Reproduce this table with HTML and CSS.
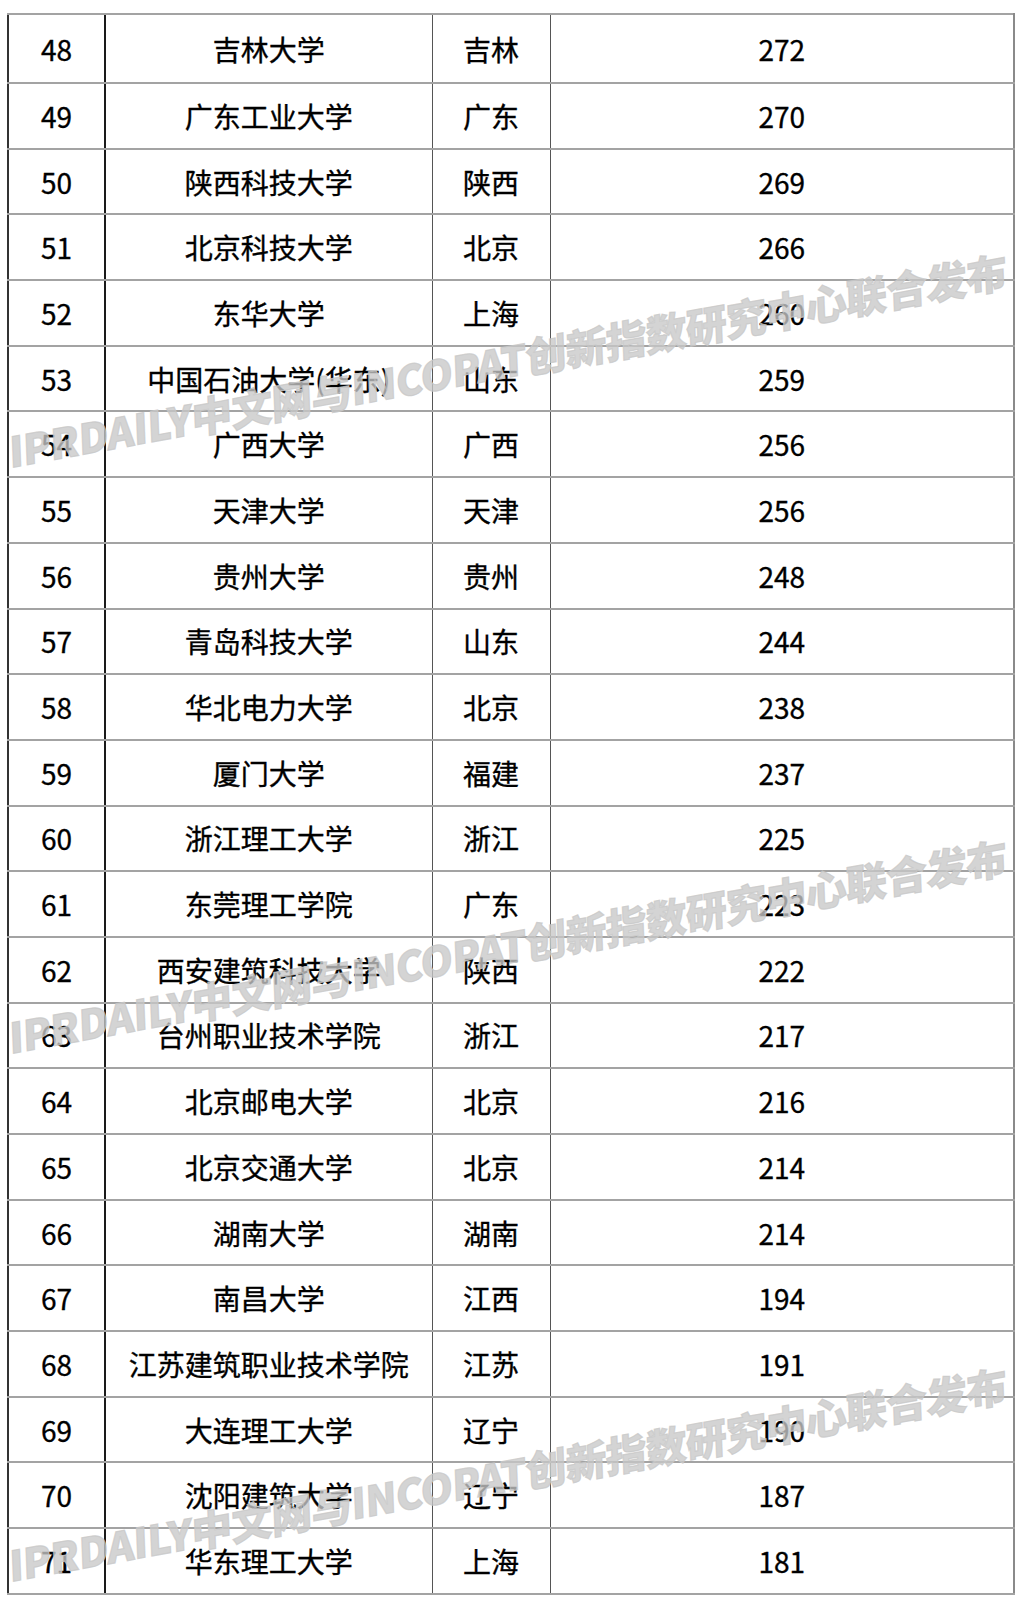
FILE: index.html
```html
<!DOCTYPE html>
<html lang="zh">
<head>
<meta charset="utf-8">
<link rel="stylesheet" href="styles.css">
</head>
<body>
<div class="page">
<table class="rank">
<colgroup><col class="c1"><col class="c2"><col class="c3"><col class="c4"></colgroup>
<tbody>
<tr class="first"><td>48</td><td>吉林大学</td><td>吉林</td><td>272</td></tr>
<tr><td>49</td><td>广东工业大学</td><td>广东</td><td>270</td></tr>
<tr><td>50</td><td>陕西科技大学</td><td>陕西</td><td>269</td></tr>
<tr><td>51</td><td>北京科技大学</td><td>北京</td><td>266</td></tr>
<tr><td>52</td><td>东华大学</td><td>上海</td><td>260</td></tr>
<tr><td>53</td><td>中国石油大学(华东)</td><td>山东</td><td>259</td></tr>
<tr><td>54</td><td>广西大学</td><td>广西</td><td>256</td></tr>
<tr><td>55</td><td>天津大学</td><td>天津</td><td>256</td></tr>
<tr><td>56</td><td>贵州大学</td><td>贵州</td><td>248</td></tr>
<tr><td>57</td><td>青岛科技大学</td><td>山东</td><td>244</td></tr>
<tr><td>58</td><td>华北电力大学</td><td>北京</td><td>238</td></tr>
<tr><td>59</td><td>厦门大学</td><td>福建</td><td>237</td></tr>
<tr><td>60</td><td>浙江理工大学</td><td>浙江</td><td>225</td></tr>
<tr><td>61</td><td>东莞理工学院</td><td>广东</td><td>223</td></tr>
<tr><td>62</td><td>西安建筑科技大学</td><td>陕西</td><td>222</td></tr>
<tr><td>63</td><td>台州职业技术学院</td><td>浙江</td><td>217</td></tr>
<tr><td>64</td><td>北京邮电大学</td><td>北京</td><td>216</td></tr>
<tr><td>65</td><td>北京交通大学</td><td>北京</td><td>214</td></tr>
<tr><td>66</td><td>湖南大学</td><td>湖南</td><td>214</td></tr>
<tr><td>67</td><td>南昌大学</td><td>江西</td><td>194</td></tr>
<tr><td>68</td><td>江苏建筑职业技术学院</td><td>江苏</td><td>191</td></tr>
<tr><td>69</td><td>大连理工大学</td><td>辽宁</td><td>190</td></tr>
<tr><td>70</td><td>沈阳建筑大学</td><td>辽宁</td><td>187</td></tr>
<tr><td>71</td><td>华东理工大学</td><td>上海</td><td>181</td></tr>
</tbody>
</table>
<div class="wm wm1">IPRDAILY中文网与INCOPAT创新指数研究中心联合发布</div>
<div class="wm wm2">IPRDAILY中文网与INCOPAT创新指数研究中心联合发布</div>
<div class="wm wm3">IPRDAILY中文网与INCOPAT创新指数研究中心联合发布</div>
</div>
</body>
</html>
```

FILE: styles.css
```css
html, body {
  margin: 0;
  padding: 0;
  background: #ffffff;
}
.page {
  position: relative;
  width: 1018px;
  height: 1600px;
  padding: 13px 0 0 7px;
  box-sizing: border-box;
  font-family: "Noto Sans CJK SC", "Noto Sans", sans-serif;
  color: #000000;
}
.rank {
  border-collapse: collapse;
  width: 1006px;
  table-layout: fixed;
  font-size: 28px;
}
.c1 { width: 97px; }
.c2 { width: 327px; }
.c3 { width: 118px; }
.c4 { width: 464px; }
.rank td {
  height: 65.7px;
  padding: 0;
  box-sizing: border-box;
  text-align: center;
  vertical-align: middle;
  line-height: 1;
  white-space: nowrap;
  -webkit-text-stroke: 0.35px #000000;
  border-top: 2px solid #a3a3a3;
  border-bottom: 2px solid #a3a3a3;
  border-left: 1px solid #555555;
  border-right: 1px solid #555555;
}
.rank td:first-child {
  border-left: 2px solid #333333;
}
.rank td:nth-child(2) {
  border-left: 2px solid #1a1a1a;
}
.rank td:last-child {
  border-right: 2px solid #8a8a8a;
}
.rank tr.first td {
  height: 69px;
}
.wm {
  position: absolute;
  left: 10px;
  font-size: 41px;
  font-weight: 900;
  font-style: normal;
  letter-spacing: -0.3px;
  color: rgba(200, 200, 200, 0.78);
  -webkit-text-stroke: 1.2px rgba(200, 200, 200, 0.78);
  white-space: nowrap;
  transform-origin: 0 100%;
  transform: rotate(-10.3deg) skewX(-8deg);
  pointer-events: none;
  line-height: 1;
}
.wm1 { top: 430px; }
.wm2 { top: 1016px; }
.wm3 { top: 1544px; }
```
